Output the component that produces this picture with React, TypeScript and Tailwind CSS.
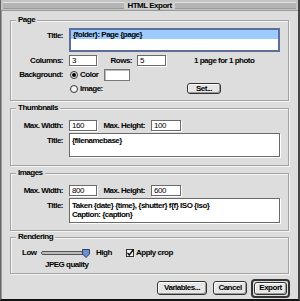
import React from 'react';

const font = { fontFamily: '"Liberation Sans", Arial, sans-serif' };

export default function App() {
  return (
    <div style={font} className="relative flex h-[301px] w-[300px] flex-col overflow-hidden border-b-2 border-l border-r-2 border-b-[#111] border-l-[#666] border-r-[#444] bg-[#dddddd] text-[8px] font-bold leading-none tracking-[-0.5px] text-black">
      <TitleBar />
      <div className="flex flex-1 flex-col border-l border-t border-[#9a9a9a] pl-[8px] pt-[9px]">
        <Group title="Page" h="h-[81px]">
          <div className="flex flex-col pt-[7px]">
            <div className="flex items-start">
              <Label w="w-[52px]" className="pt-[4px]">Title:</Label>
              <div className="ml-[6px] h-[24px] w-[211px] border-2 border-[#5d6d9c] bg-white">
                <div className="h-[9px] bg-[#9cccff] pl-[2px] pt-[1px]">{'{folder}: Page {page}'}</div>
              </div>
            </div>
            <div className="mt-[3px] flex items-center">
              <Label w="w-[52px]">Columns:</Label>
              <Field className="ml-[6px] w-[28px]">3</Field>
              <Label w="w-[35px]">Rows:</Label>
              <Field className="ml-[5px] w-[29px]">5</Field>
              <span className="ml-[28px]">1 page for 1 photo</span>
            </div>
            <div className="mt-[3px] flex h-[12px] items-center">
              <Label w="w-[52px]">Background:</Label>
              <div className="ml-[7px] flex w-[34px] items-center">
                <Radio on />
                <span className="ml-[2px]">Color</span>
              </div>
              <div className="h-[12px] w-[26px] border border-[#777] bg-white shadow-[inset_1px_1px_0_#bbb]" />
            </div>
            <div className="mt-[2px] flex h-[11px] items-center">
              <div className="w-[52px] shrink-0" />
              <div className="ml-[7px] flex w-[117px] items-center">
                <Radio />
                <span className="ml-[2px]">Image:</span>
              </div>
              <Button className="h-[11px] w-[34px]">Set...</Button>
            </div>
          </div>
        </Group>

        <Group title="Thumbnails" h="h-[58px]" className="mt-[7px]">
          <SizeRows w="160" hgt="100" lines={['{filenamebase}']} tall="h-[24px]" />
        </Group>

        <Group title="Images" h="h-[58px]" className="mt-[7px]">
          <SizeRows w="800" hgt="600" lines={['Taken {date} {time}, {shutter} f{f} ISO {iso}', 'Caption: {caption}']} tall="h-[25px]" />
        </Group>

        <Group title="Rendering" h="h-[37px]" className="mt-[6px]">
          <div className="flex flex-col pt-[10px]">
            <div className="flex h-[9px] items-center">
              <span className="ml-[11px] w-[19px] shrink-0">Low</span>
              <Slider />
              <span className="ml-[6px] w-[30px] shrink-0">High</span>
              <Check />
              <span className="ml-[2px]">Apply crop</span>
            </div>
            <div className="ml-[34px] mt-[4px]">JPEG quality</div>
          </div>
        </Group>

        <div className="mt-[5px] flex h-[18px] items-center pl-[147px]">
          <Button className="h-[14px] w-[50px]">Variables...</Button>
          <Button className="ml-[6px] h-[14px] w-[34px]">Cancel</Button>
          <div className="ml-[4px] rounded-[4px] border-2 border-[#333] p-[1px]">
            <Button className="h-[13px] w-[33px]">Export</Button>
          </div>
        </div>
      </div>
    </div>
  );
}

function TitleBar() {
  return (
    <div className="flex h-[10px] items-center bg-[#c4c4c4] px-[2px]">
      <div className="flex h-[7px] flex-1 items-center justify-center border-b border-t border-b-[#999] border-t-[#e4e4e4] bg-[#b4b4b4]">
        <span className="bg-[#cfcfcf] px-[3px] text-[8px] leading-[7px]">HTML Export</span>
      </div>
    </div>
  );
}

function Group({ title, h, className = '', children }: { title: string; h: string; className?: string; children: React.ReactNode }) {
  return (
    <div className={`relative w-[279px] border border-[#a3a3a3] shadow-[1px_1px_0_#f4f4f4,inset_1px_1px_0_#f4f4f4] ${h} ${className}`}>
      <span className="absolute left-[5px] top-[-5px] bg-[#dddddd] px-[2px]">{title}</span>
      {children}
    </div>
  );
}

function Label({ w, className = '', children }: { w: string; className?: string; children: React.ReactNode }) {
  return <span className={`shrink-0 text-right ${w} ${className}`}>{children}</span>;
}

function Field({ className = '', children }: { className?: string; children?: React.ReactNode }) {
  return (
    <div className={`h-[11px] shrink-0 border border-[#6a6a6a] bg-white pl-[2px] pt-[1px] font-normal shadow-[1px_1px_0_#fff] ${className}`}>
      {children}
    </div>
  );
}

function SizeRows({ w, hgt, lines, tall }: { w: string; hgt: string; lines: string[]; tall: string }) {
  return (
    <div className="flex flex-col pt-[11px]">
      <div className="flex items-center">
        <Label w="w-[52px]">Max. Width:</Label>
        <Field className="ml-[6px] w-[28px]">{w}</Field>
        <Label w="w-[48px]">Max. Height:</Label>
        <Field className="ml-[6px] w-[30px]">{hgt}</Field>
      </div>
      <div className="mt-[2px] flex items-start">
        <Label w="w-[52px]" className="pt-[4px]">Title:</Label>
        <div className={`ml-[6px] w-[211px] border border-[#6a6a6a] bg-white pl-[2px] pt-[3px] shadow-[1px_1px_0_#fff] ${tall}`}>
          {lines.map((l) => (
            <div key={l} className="h-[9px]">{l}</div>
          ))}
        </div>
      </div>
    </div>
  );
}

function Radio({ on = false, className = '' }: { on?: boolean; className?: string }) {
  return (
    <svg width="8" height="8" viewBox="0 0 8 8" className={`shrink-0 ${className}`}>
      <circle cx="4" cy="4" r="3.5" fill="#f4f4f4" stroke="#333" strokeWidth="1" />
      {on && <circle cx="4" cy="4" r="2" fill="#000" />}
    </svg>
  );
}

function Check({ className = '' }: { className?: string }) {
  return (
    <svg width="8" height="8" viewBox="0 0 8 8" className={`shrink-0 ${className}`}>
      <rect x="0.5" y="0.5" width="7" height="7" fill="#f0f0f0" stroke="#333" />
      <path d="M1.5 4 L3.3 6 L7.5 0.5" fill="none" stroke="#000" strokeWidth="1.3" />
    </svg>
  );
}

function Slider() {
  return (
    <svg width="49" height="10" viewBox="0 0 49 10" className="shrink-0">
      <rect x="0.5" y="3.5" width="44" height="3" rx="1.5" fill="#bbb" stroke="#555" />
      <path d="M41.5 1.5 H48.5 V6 L45 9.5 L41.5 6 Z" fill="#6c8fd0" stroke="#2c3f6e" />
    </svg>
  );
}

function Button({ className = '', children }: { className?: string; children: React.ReactNode }) {
  return (
    <div className={`flex shrink-0 items-center justify-center rounded-[3px] border border-[#333] bg-[#e6e6e6] shadow-[inset_1px_1px_0_#fff,inset_-1px_-1px_0_#999] ${className}`}>
      {children}
    </div>
  );
}
